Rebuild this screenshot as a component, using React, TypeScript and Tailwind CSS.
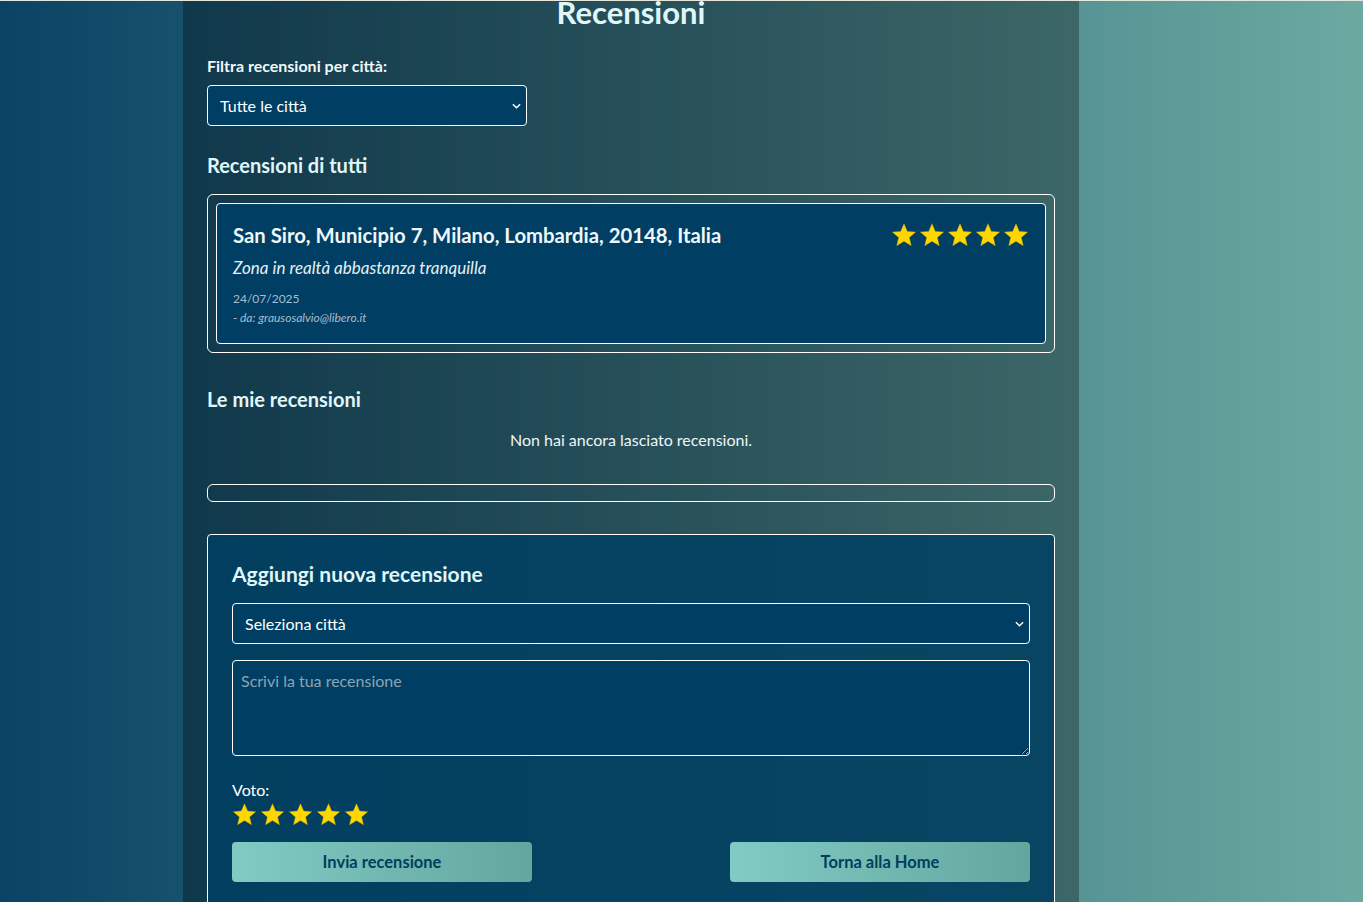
import React from "react";

const font = { fontFamily: "Lato, 'Noto Sans', sans-serif" };

function Star({ size = 24 }: { size?: number }) {
  return (
    <svg viewBox="0 0 24 24" width={size} height={size} className="block">
      <path
        d="M12 1.6l3.05 7.1 7.7.6-5.85 5.05 1.8 7.55L12 17.85 5.3 21.9l1.8-7.55L1.25 9.3l7.7-.6z"
        fill="#ffd700"
        stroke="#c9a800"
        strokeWidth="0.4"
      />
    </svg>
  );
}

function Stars({ size, gap }: { size: number; gap: string }) {
  return (
    <div className={`flex ${gap}`}>
      {[0, 1, 2, 3, 4].map((i) => (
        <Star key={i} size={size} />
      ))}
    </div>
  );
}

const reviews = [
  {
    place: "San Siro, Municipio 7, Milano, Lombardia, 20148, Italia",
    text: "Zona in realtà abbastanza tranquilla",
    date: "24/07/2025",
    author: "grausosalvio@libero.it",
  },
];

const selectClass =
  "w-full appearance-none rounded-[4px] border border-white bg-[#003f63] pl-3 pr-8 text-[16px] text-white outline-none";

function Chevron() {
  return (
    <svg viewBox="0 0 10 6" width="9" height="6" className="pointer-events-none absolute right-[6px] top-1/2 -translate-y-1/2">
      <path d="M1 1l4 4 4-4" fill="none" stroke="white" strokeWidth="1.6" />
    </svg>
  );
}

const buttonClass =
  "h-[40px] w-[300px] rounded-[4px] bg-[linear-gradient(to_right,#80cbc4,#64a69f)] text-[16.5px] font-bold text-[#003f5c]";

export default function App() {
  return (
    <div
      className="h-[902px] overflow-hidden border-t border-[#e6e6dc] bg-[linear-gradient(to_right,#0a4364,#6ba9a1)] text-white"
      style={font}
    >
      <div className="ml-[183px] flow-root h-full w-[896px] bg-black/30 px-6">
        <h1 className="-mt-[7px] text-center text-[31px] font-bold leading-[36px] text-[#e0f7fa]">Recensioni</h1>

        <label className="mt-[27px] block text-[16px] font-bold leading-[18px] text-[#f1f8fa]">Filtra recensioni per città:</label>
        <div className="relative mt-[10px] w-[320px]">
          <select className={`${selectClass} h-[41px]`} defaultValue="">
            <option value="">Tutte le città</option>
          </select>
          <Chevron />
        </div>

        <h2 className="mt-[27px] text-[20px] font-bold leading-[24px] text-[#e0f7fa]">Recensioni di tutti</h2>
        <div className="mt-[17px] rounded-[6px] border border-white p-2">
          {reviews.map((r) => (
            <div key={r.place} className="rounded-[4px] border border-white bg-[#003f63] px-4 pb-[17px] pt-[17px]">
              <div className="flex items-start justify-between">
                <h3 className="text-[20.3px] font-bold leading-[28px] text-[#eef8fa]">{r.place}</h3>
                <div className="pt-[1px]">
                  <Stars size={26} gap="gap-[2px]" />
                </div>
              </div>
              <p className="mt-[8px] text-[17px] italic leading-[22px] text-[#e6f0f3]">{r.text}</p>
              <p className="mt-[12px] text-[12px] leading-[16px] text-[#a9bccb]">{r.date}</p>
              <p className="mt-[3px] text-[12px] italic leading-[16px] text-[#a9bccb]">- da: {r.author}</p>
            </div>
          ))}
        </div>

        <h2 className="mt-[34px] text-[20px] font-bold leading-[24px] text-[#e0f7fa]">Le mie recensioni</h2>
        <p className="mt-[21px] text-center text-[16px] leading-[16px] text-[#eef6f8]">Non hai ancora lasciato recensioni.</p>
        <div className="mt-[36px] h-[18px] rounded-[6px] border border-white" />

        <div className="mt-[32px] rounded-[4px] border border-white bg-[#003f63]/85 px-6 pt-[26px]">
          <h2 className="text-[21px] font-bold leading-[26px] text-[#e0f7fa]">Aggiungi nuova recensione</h2>
          <div className="relative mt-[16px]">
            <select className={`${selectClass} h-[41px]`} defaultValue="">
              <option value="">Seleziona città</option>
            </select>
            <Chevron />
          </div>
          <textarea
            placeholder="Scrivi la tua recensione"
            className="mt-[16px] block h-[96px] w-full resize-y rounded-[4px] border border-white bg-[#003f63] px-2 py-2 text-[16px] text-white outline-none placeholder:text-[#8ea3b3]"
          />
          <p className="mt-[26px] text-[16px] leading-[16px]">Voto:</p>
          <div className="mt-[4px]">
            <Stars size={25} gap="gap-[3px]" />
          </div>
          <div className="mt-[15px] flex justify-between pb-8">
            <button className={buttonClass}>Invia recensione</button>
            <button className={buttonClass}>Torna alla Home</button>
          </div>
        </div>
      </div>
    </div>
  );
}
